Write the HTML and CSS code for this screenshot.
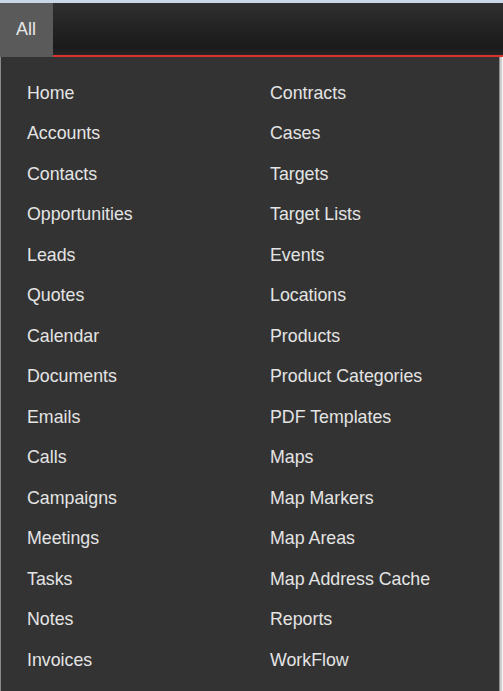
FILE: index.html
```html
<!DOCTYPE html>
<html lang="en">
<head>
<meta charset="UTF-8">
<title>All modules</title>
<link rel="stylesheet" href="styles.css">
</head>
<body>
  <div class="topline"></div>
  <nav class="navbar">
    <a class="tab" href="#">All</a>
  </nav>
  <div class="page">
    <div class="dropdown">
      <ul class="modules">
        <li><a href="#">Home</a></li>
        <li><a href="#">Contracts</a></li>
        <li><a href="#">Accounts</a></li>
        <li><a href="#">Cases</a></li>
        <li><a href="#">Contacts</a></li>
        <li><a href="#">Targets</a></li>
        <li><a href="#">Opportunities</a></li>
        <li><a href="#">Target Lists</a></li>
        <li><a href="#">Leads</a></li>
        <li><a href="#">Events</a></li>
        <li><a href="#">Quotes</a></li>
        <li><a href="#">Locations</a></li>
        <li><a href="#">Calendar</a></li>
        <li><a href="#">Products</a></li>
        <li><a href="#">Documents</a></li>
        <li><a href="#">Product Categories</a></li>
        <li><a href="#">Emails</a></li>
        <li><a href="#">PDF Templates</a></li>
        <li><a href="#">Calls</a></li>
        <li><a href="#">Maps</a></li>
        <li><a href="#">Campaigns</a></li>
        <li><a href="#">Map Markers</a></li>
        <li><a href="#">Meetings</a></li>
        <li><a href="#">Map Areas</a></li>
        <li><a href="#">Tasks</a></li>
        <li><a href="#">Map Address Cache</a></li>
        <li><a href="#">Notes</a></li>
        <li><a href="#">Reports</a></li>
        <li><a href="#">Invoices</a></li>
        <li><a href="#">WorkFlow</a></li>
      </ul>
    </div>
  </div>
</body>
</html>
```

FILE: styles.css
```css
body {
  margin: 0;
  background-color: #f2f2f2;
  font-family: "Liberation Sans", Arial, sans-serif;
  overflow: hidden;
}
.topline {
  height: 3px;
  background-color: #c9d7e8;
}
.navbar {
  display: flex;
  height: 52px;
  background: linear-gradient(#2f2f2f, #1a1a1a 85%, #262626);
  border-bottom: 2px solid #d9322e;
}
.tab {
  display: flex;
  align-items: center;
  width: 53px;
  height: 54px;
  margin-bottom: -2px;
  padding: 0 0 2px 16px;
  box-sizing: border-box;
  background-color: #5a5a5a;
  color: #e6e6e6;
  font-size: 18px;
  text-decoration: none;
}
.page {
  padding-right: 3px;
  background: linear-gradient(90deg, transparent 500px, #cfcfcf 500px, #cfcfcf 502px, #f2f2f2 502px);
}
.dropdown {
  height: 640px;
  background-color: #333;
  border: 1px solid #8a8a8a;
  border-top: none;
  border-radius: 0 0 3px 3px;
}
.modules {
  list-style: none;
  margin: 0;
  padding: 16px 0 0 26px;
  display: grid;
  grid-template-columns: 243px 1fr;
}
.modules li {
  height: 40.5px;
  display: flex;
  align-items: center;
}
.modules a {
  color: #e4e4e4;
  font-size: 17.8px;
  text-decoration: none;
}
```
